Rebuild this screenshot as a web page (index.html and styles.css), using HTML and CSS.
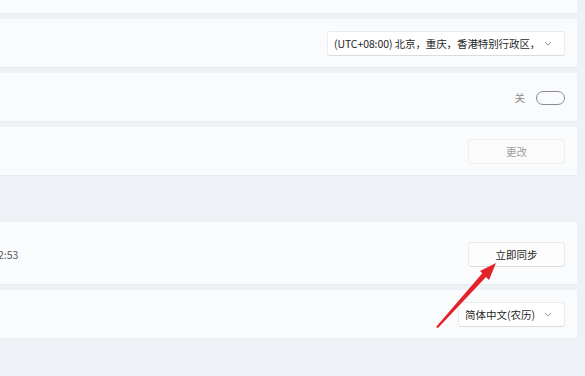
FILE: index.html
```html
<html>
    <head>
        <meta charset="utf-8">
        <link rel="stylesheet" href="styles.css">
    </head>
    <body>
        <div class="page">
            <div class="card cardTop"></div>
            <div class="card">
                <div class="dropdown wide">
                    <span class="value">(UTC+08:00) 北京，重庆，香港特别行政区，</span>
                    <svg class="chevron" width="8" height="5" viewBox="0 0 8 5"><path d="M1 1 L4 4 L7 1" fill="none" stroke="#9a9a9a" stroke-width="1"/></svg>
                </div>
            </div>
            <div class="card">
                <span class="toggleLabel">关</span>
                <span class="toggle"></span>
            </div>
            <div class="card">
                <button class="btn disabled">更改</button>
            </div>
            <div class="section"></div>
            <div class="card tall">
                <span class="syncTime">2:53</span>
                <button class="btn">立即同步</button>
            </div>
            <div class="card">
                <div class="dropdown">
                    <span class="value">简体中文(农历)</span>
                    <svg class="chevron" width="8" height="5" viewBox="0 0 8 5"><path d="M1 1 L4 4 L7 1" fill="none" stroke="#9a9a9a" stroke-width="1"/></svg>
                </div>
            </div>
        </div>
        <svg class="arrow" width="585" height="376" xmlns="http://www.w3.org/2000/svg">
            <polygon points="436,327 438,328 486.5,276.5 482.5,273" fill="#e3232b"></polygon>
            <polygon points="496,263 480,271 489,280" fill="#e3232b"></polygon>
        </svg>
    </body>
</html>
```

FILE: styles.css
```css
body {
    margin: 0;
    padding: 0;
    width: 585px;
    height: 376px;
    overflow: hidden;
    background-color: #eef1f5;
    font-family: "Noto Sans CJK SC", "Noto Sans", sans-serif;
    font-size: 10.5px;
    color: #1f1f1f;
}
.page {
    display: flex;
    flex-direction: column;
    gap: 5px;
    padding-right: 8px;
}
.card {
    height: 49px;
    background-color: #fafbfc;
    display: flex;
    align-items: center;
    justify-content: flex-end;
    padding-right: 12px;
    border-bottom: 1px solid #e9ecef;
    box-sizing: border-box;
}
.cardTop {
    height: 14px;
}
.tall {
    height: 63px;
    justify-content: space-between;
}
.section {
    height: 36px;
}
.dropdown {
    height: 25px;
    box-sizing: border-box;
    display: flex;
    align-items: center;
    gap: 9px;
    padding: 0 12px 0 6px;
    background-color: #ffffff;
    border: 1px solid #ebebeb;
    border-bottom-color: #dcdcdc;
    border-radius: 3px;
    white-space: nowrap;
}
.wide {
    width: 238px;
    padding-left: 6px;
}
.wide .value {
    flex: 1 1 0;
    min-width: 0;
    letter-spacing: -0.1px;
}
.chevron {
    flex: none;
}
.toggleLabel {
    color: #8a8a8a;
    margin-right: 11px;
}
.toggle {
    width: 29px;
    height: 14px;
    box-sizing: border-box;
    border: 1px solid #8c8c8c;
    border-radius: 8px;
    margin-top: 1px;
}
.btn {
    width: 97px;
    height: 25px;
    font-family: inherit;
    font-size: 10.5px;
    color: #1f1f1f;
    background-color: #fdfdfd;
    border: 1px solid #ebebeb;
    border-bottom-color: #dedede;
    border-radius: 3px;
    padding: 0;
}
.tall .btn {
    margin-top: 2px;
}
.disabled {
    color: #a0a0a0;
    background-color: #fbfbfb;
    border-color: #eeeeee;
}
.syncTime {
    margin-left: -2px;
    color: #5a5a5a;
    margin-top: 2px;
}
.arrow {
    position: absolute;
    top: 0;
    left: 0;
}
```
